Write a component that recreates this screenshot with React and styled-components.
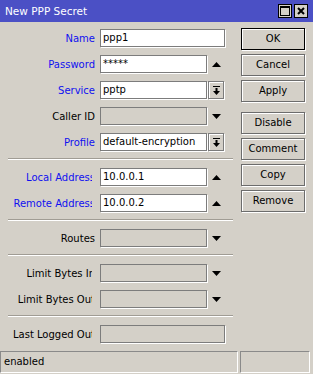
import React from "react";
import styled, { createGlobalStyle } from "styled-components";

const Global = createGlobalStyle`
  html, body { margin: 0; padding: 0; background: #d4d0c8; }
  body { font-family: "DejaVu Sans", "Liberation Sans", sans-serif; font-size: 10px; color: #000; }
  #root { height: 100vh; }
`;

const Window = styled.div`
  height: 374px;
  width: 313px;
  display: flex;
  flex-direction: column;
  background: #d4d0c8;
  overflow: hidden;
`;

const TitleBar = styled.div`
  height: 22px;
  flex: none;
  background: #4b50c5;
  display: flex;
  align-items: center;
  padding: 0 5px 0 5px;
`;

const Title = styled.div`
  flex: 1;
  color: #fff;
  font-size: 10.5px;
  line-height: 22px;
`;

const TitleButtons = styled.div`
  display: flex;
  gap: 2px;
`;

const TitleButton = styled.div`
  width: 14px;
  height: 14px;
  box-sizing: border-box;
  border: 1px solid #000;
  background: #d4d0c8;
  display: flex;
  align-items: center;
  justify-content: center;
`;

const Body = styled.div`
  flex: 1;
  display: flex;
  padding: 6px 8px 0 8px;
  gap: 8px;
`;

const Form = styled.div`
  width: 225px;
  display: flex;
  flex-direction: column;
  padding-top: 1px;
`;

const Row = styled.div`
  display: flex;
  align-items: center;
  height: 18px;
  margin-bottom: 8px;
`;

const Label = styled.div`
  width: ${(p) => (p.$clip ? 84 : 87)}px;
  margin-right: ${(p) => (p.$clip ? 8 : 5)}px;
  display: flex;
  justify-content: flex-end;
  white-space: nowrap;
  overflow: hidden;
  color: ${(p) => (p.$accent ? "#1010f0" : "#000")};
`;

const LabelText = styled.span`
  flex: none;
  margin-right: ${(p) => (p.$clip ? -3 : 0)}px;
`;

const Field = styled.div`
  box-sizing: border-box;
  width: ${(p) => (p.$wide ? 125 : 107)}px;
  height: 18px;
  border: 1px solid #7c7c7c;
  box-shadow: 1px 1px 0 #fff;
  background: ${(p) => (p.$disabled ? "#d4d0c8" : "#fff")};
  padding-left: 2px;
  line-height: 16px;
  white-space: nowrap;
  overflow: hidden;
`;

const Slot = styled.div`
  width: 18px;
  height: 18px;
  display: flex;
  align-items: center;
  justify-content: center;
`;

const DropButton = styled.div`
  box-sizing: border-box;
  width: 16px;
  height: 18px;
  margin-left: 1px;
  border: 1px solid #7c7c7c;
  box-shadow: 1px 1px 0 #fff, inset 1px 1px 0 #fff;
  display: flex;
  align-items: center;
  justify-content: center;
`;

const Separator = styled.div`
  height: 0;
  border-top: 1px solid #a09c94;
  border-bottom: 1px solid #fff;
  margin: -1px 0 8px 0;
`;

const Buttons = styled.div`
  width: 64px;
  display: flex;
  flex-direction: column;
`;

const Button = styled.div`
  box-sizing: border-box;
  height: 22px;
  margin-bottom: ${(p) => (p.$groupEnd ? 10 : 4)}px;
  border: 1px solid ${(p) => (p.$default ? "#000" : "#6c6c6c")};
  box-shadow: 1px 1px 0 #fff, inset 1px 1px 0 #fff;
  display: flex;
  align-items: center;
  justify-content: center;
  line-height: 20px;
`;

const StatusBar = styled.div`
  flex: none;
  height: 24px;
  display: flex;
  gap: 2px;
  padding-right: 3px;
`;

const StatusPanel = styled.div`
  box-sizing: border-box;
  height: 22px;
  width: ${(p) => (p.$w ? `${p.$w}px` : "auto")};
  flex: ${(p) => (p.$grow ? 1 : "none")};
  border-top: 1px solid #8a8a8a;
  border-left: 1px solid #8a8a8a;
  border-right: 1px solid #fff;
  border-bottom: 1px solid #fff;
  padding-left: 3px;
  line-height: 20px;
`;

const Up = () => (
  <svg width="9" height="5" viewBox="0 0 9 5"><polygon points="0,5 4.5,0 9,5" fill="#000" /></svg>
);
const Down = () => (
  <svg width="9" height="5" viewBox="0 0 9 5"><polygon points="0,0 9,0 4.5,5" fill="#000" /></svg>
);
const DropIcon = () => (
  <svg width="7" height="9" viewBox="0 0 7 9">
    <rect x="0" y="0" width="7" height="1" fill="#000" />
    <rect x="2.5" y="2" width="2" height="3" fill="#000" />
    <polygon points="0,5 7,5 3.5,9" fill="#000" />
  </svg>
);

const rowsA = [
  { label: "Name", accent: true, value: "ppp1", wide: true },
  { label: "Password", accent: true, value: "*****", ctl: "up" },
  { label: "Service", accent: true, value: "pptp", ctl: "drop" },
  { label: "Caller ID", disabled: true, ctl: "down" },
  { label: "Profile", accent: true, value: "default-encryption", ctl: "drop" },
];

const FormRow = ({ r }) => (
  <Row>
    <Label $accent={r.accent} $clip={r.clip}>
      <LabelText $clip={r.clip}>{r.label}</LabelText>
    </Label>
    <Field $wide={r.wide} $disabled={r.disabled}>{r.value}</Field>
    {r.ctl === "up" && <Slot><Up /></Slot>}
    {r.ctl === "down" && <Slot><Down /></Slot>}
    {r.ctl === "drop" && <DropButton><DropIcon /></DropButton>}
  </Row>
);

export default function App() {
  return (
    <>
      <Global />
      <Window>
        <TitleBar>
          <Title>New PPP Secret</Title>
          <TitleButtons>
            <TitleButton>
              <svg width="10" height="10" viewBox="0 0 10 10"><rect x="0.5" y="0.5" width="9" height="9" fill="none" stroke="#000" /><rect x="0" y="0" width="10" height="2" fill="#000" /></svg>
            </TitleButton>
            <TitleButton>
              <svg width="8" height="8" viewBox="0 0 8 8"><path d="M1 1 L7 7 M7 1 L1 7" stroke="#000" strokeWidth="2" /></svg>
            </TitleButton>
          </TitleButtons>
        </TitleBar>
        <Body>
          <Form>
            {rowsA.map((r) => <FormRow key={r.label} r={r} />)}
            <Separator />
            <FormRow r={{ label: "Local Address", accent: true, value: "10.0.0.1", ctl: "up", clip: true }} />
            <FormRow r={{ label: "Remote Address", accent: true, value: "10.0.0.2", ctl: "up", clip: true }} />
            <Separator />
            <FormRow r={{ label: "Routes", disabled: true, ctl: "down" }} />
            <Separator />
            <FormRow r={{ label: "Limit Bytes In", disabled: true, ctl: "down", clip: true }} />
            <FormRow r={{ label: "Limit Bytes Out", disabled: true, ctl: "down", clip: true }} />
            <Separator />
            <FormRow r={{ label: "Last Logged Out", disabled: true, wide: true, clip: true }} />
          </Form>
          <Buttons>
            <Button $default>OK</Button>
            <Button>Cancel</Button>
            <Button $groupEnd>Apply</Button>
            <Button>Disable</Button>
            <Button>Comment</Button>
            <Button>Copy</Button>
            <Button>Remove</Button>
          </Buttons>
        </Body>
        <StatusBar>
          <StatusPanel $grow>enabled</StatusPanel>
          <StatusPanel $w={70} />
        </StatusBar>
      </Window>
    </>
  );
}
